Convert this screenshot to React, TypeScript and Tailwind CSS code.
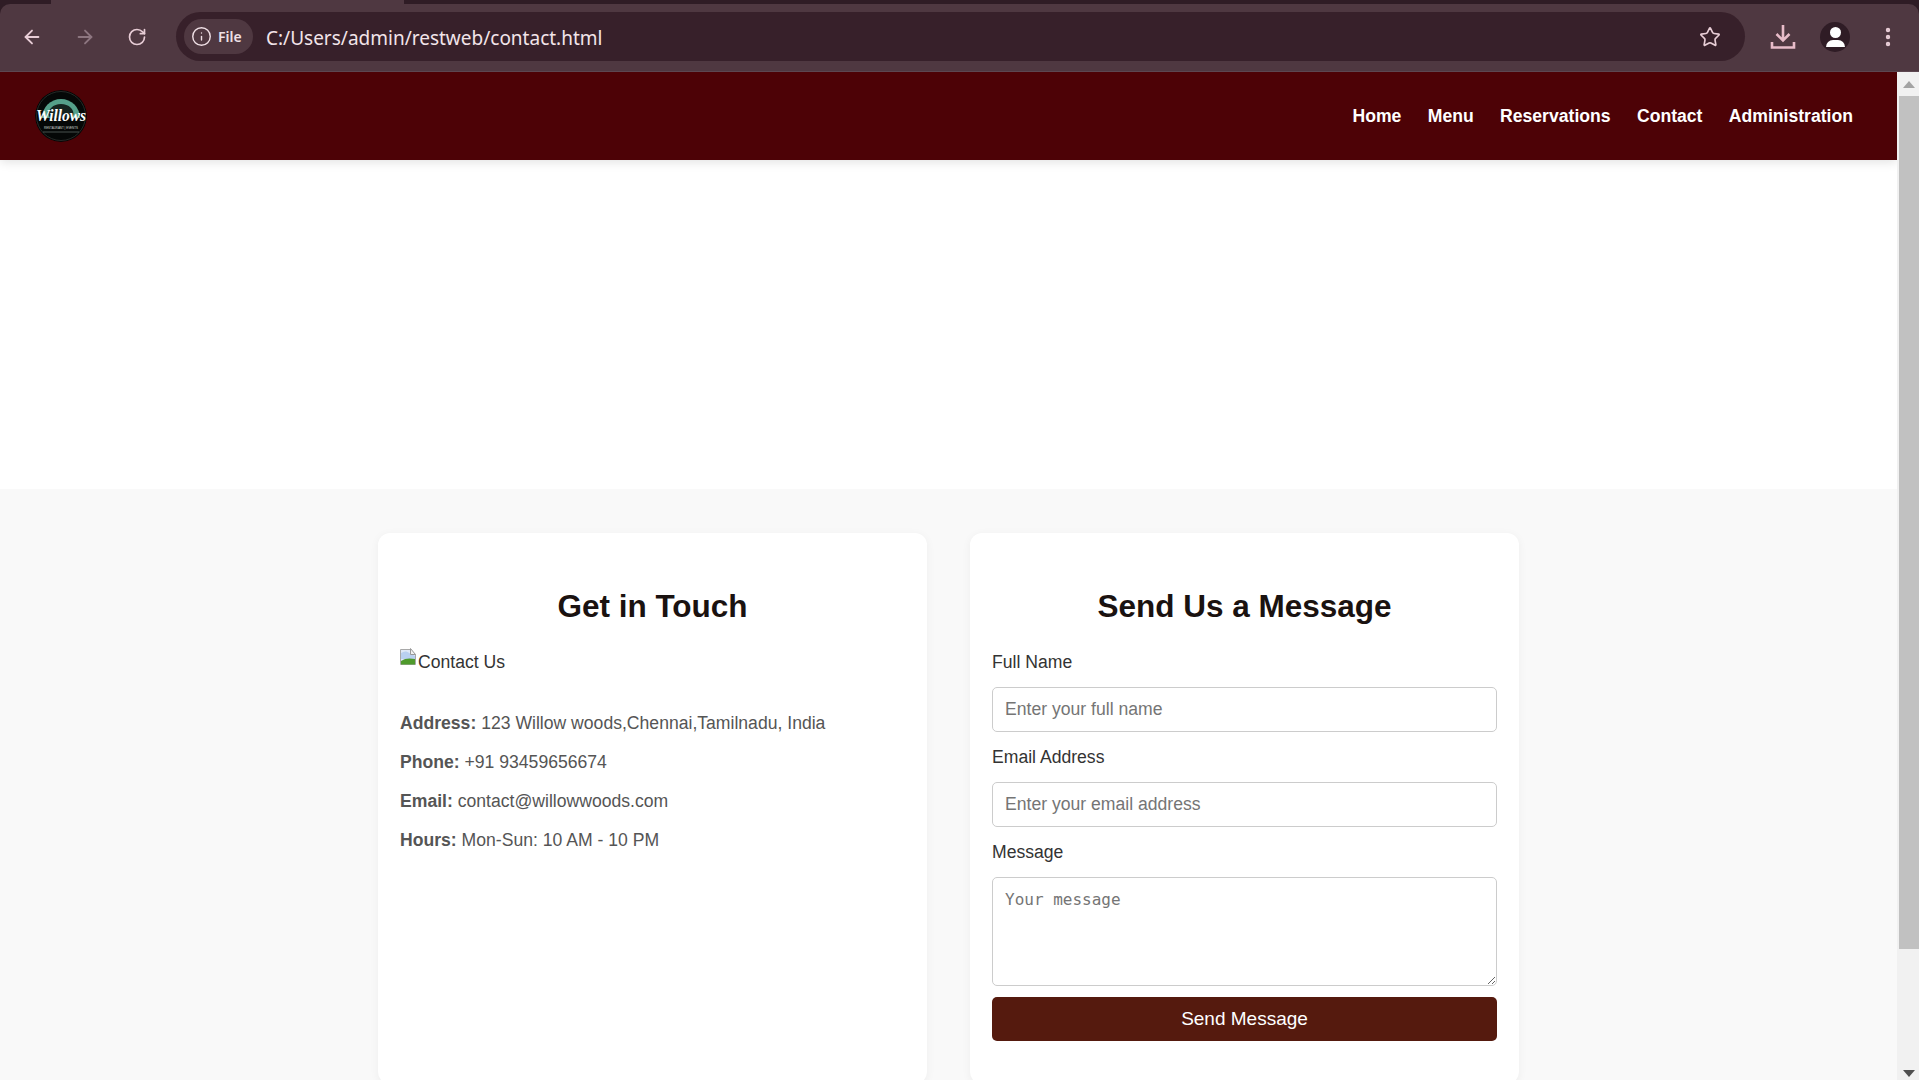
import { ArrowLeft, ArrowRight, RotateCw, Info, Star, EllipsisVertical } from "lucide-react";

const links = ["Home", "Menu", "Reservations", "Contact", "Administration"];

const BrowserBar = () => {
  return (
    <div className="h-[72px] shrink-0 bg-[#2f1c25] font-['Noto_Sans',sans-serif]">
      <div className="h-1 pl-[51px]">
        <div className="h-1 w-[353px] bg-[#4f3841]" />
      </div>
      <div className="h-[68px] rounded-t-[10px] bg-[#4f3841] border-b border-[#5d4751] flex items-center pb-[2px]">
        <div className="w-[176px] pl-[21px] flex items-center gap-[31px] text-[#e8cdd6]">
          <ArrowLeft size={22} strokeWidth={2} />
          <ArrowRight size={22} strokeWidth={2} className="text-[#8d7680]" />
          <RotateCw size={20} strokeWidth={2} />
        </div>
        <div className="w-[1569px] h-[49px] rounded-full bg-[#37202a] flex items-center pl-2 pr-[24px]">
          <div className="h-[35px] w-[69px] rounded-full bg-[#4f3841] flex items-center gap-[6px] pl-[7px] text-[#f0e0e6]">
            <Info size={21} strokeWidth={1.6} />
            <span className="text-[14px] font-semibold">File</span>
          </div>
          <span className="ml-[13px] text-[19px] leading-[24px] pt-[2px] text-[#f2e4e9]">C:/Users/admin/restweb/contact.html</span>
          <Star size={22} strokeWidth={1.8} className="ml-auto text-[#e8cdd6]" />
        </div>
        <svg width="26" height="26" viewBox="0 0 26 26" fill="none" stroke="#e8bcc9" strokeWidth="2.6" className="ml-[25px]">
          <path d="M13 1v15M6.5 10l6.5 6.5 6.5-6.5" />
          <path d="M2 18v5.5h22V18" />
        </svg>
        <div className="ml-[24px] w-[30px] h-[30px] rounded-full bg-[#2f1c25] flex flex-col items-center justify-center">
          <div className="w-[11px] h-[11px] rounded-full bg-white" />
          <div className="mt-[2px] w-[19px] h-[7px] rounded-t-[8px] bg-white" />
        </div>
        <EllipsisVertical size={24} strokeWidth={2.4} className="ml-[26px] text-[#e8cdd6]" />
      </div>
    </div>
  );
};

const Logo = () => {
  return (
    <svg width="52" height="52" viewBox="0 0 52 52" className="rounded-full">
      <circle cx="26" cy="26" r="26" fill="#050807" />
      <circle cx="26" cy="26" r="24.5" fill="none" stroke="#3a3f3d" strokeWidth="0.6" />
      <path d="M7 28a19 19 0 0 1 38 0z" fill="#55a08a" />
      <path d="M15 28c-2-3-2-7 1-10 3-3 6-4 10-4s7 1 10 4c3 3 3 7 1 10z" fill="#15241f" />
      <text x="26" y="31" textAnchor="middle" fontFamily="Liberation Serif, serif" fontStyle="italic" fontWeight="700" fontSize="16" fill="#fff" textLength="50" lengthAdjust="spacingAndGlyphs">
        Willows
      </text>
      <text x="26" y="38.5" textAnchor="middle" fontFamily="Liberation Sans, sans-serif" fontSize="3.2" fill="#d5dbd8" textLength="34" lengthAdjust="spacingAndGlyphs">
        RESTAURANT | EVENTS
      </text>
      <path d="M8 42h36" stroke="#8c9a95" strokeWidth="0.5" />
    </svg>
  );
};

const BrokenImage = () => {
  return (
    <svg width="16" height="17" viewBox="0 0 16 17" className="shrink-0 -mt-[3px] mr-[2px]">
      <path d="M0.5 1.5h10l5 5v10h-15z" fill="#dfe8f6" stroke="#a8a8a8" />
      <path d="M1 5c3-2 6-2 8 0l6 3v3H1z" fill="#b9d0f0" />
      <path d="M1 16.500v-3.500c4-3 9-3 14-2v5.500z" fill="#4f9a2c" />
      <path d="M10.500 0.500v6h5z" fill="#f2f2f2" stroke="#999" />
    </svg>
  );
};

const InfoLine = ({ label, value }: { label: string; value: string }) => {
  return (
    <p className="h-5 leading-[22px] mb-[19px] text-[#555]">
      <strong className="font-bold">{label}</strong> {value}
    </p>
  );
};

const Field = ({ label, placeholder, type }: { label: string; placeholder: string; type: string }) => {
  return (
    <>
      <label className="block h-5 leading-[22px] text-[#333]">{label}</label>
      <input
        type={type}
        placeholder={placeholder}
        className="block w-full h-[45px] mt-4 mb-[14px] px-3 bg-white border border-[#ccc] rounded-[5px] placeholder:text-[#757575]"
      />
    </>
  );
};

const Scrollbar = () => {
  return (
    <div className="w-[22px] shrink-0 bg-[#f1f1f1] flex flex-col items-end">
      <div className="w-full h-6 flex items-center justify-center pl-[2px]">
        <svg width="12" height="7" viewBox="0 0 12 7"><path d="M6 0l6 7H0z" fill="#a3a3a3" /></svg>
      </div>
      <div className="w-5 h-[853px] bg-[#c1c1c1]" />
      <div className="flex-1" />
      <div className="w-full h-[10px] flex items-start justify-center pl-[2px]">
        <svg width="12" height="7" viewBox="0 0 12 7"><path d="M0 0h12L6 7z" fill="#505050" /></svg>
      </div>
    </div>
  );
};

const App = () => {
  return (
    <div className="h-screen overflow-hidden flex flex-col font-['Liberation_Sans',Arial,sans-serif] text-[17.6px]">
      <BrowserBar />
      <div className="flex-1 min-h-0 flex">
        <main className="flex-1 min-w-0 overflow-hidden bg-white">
          <nav className="relative h-[88px] bg-[#4d0206] shadow-[0_2px_10px_rgba(0,0,0,0.12)] flex items-center justify-between pl-[35px] pr-[44px]">
            <Logo />
            <ul className="flex gap-[26.4px]">
              {links.map((link) => (
                <li key={link} className="font-bold text-white">
                  {link}
                </li>
              ))}
            </ul>
          </nav>
          <div className="h-[329px]" />
          <section className="bg-[#f9f9f9] pt-[44px] flex justify-center gap-[43px]">
            <div className="w-[549px] h-[551px] shrink-0 bg-white rounded-[12px] shadow-[0_2px_10px_rgba(0,0,0,0.05)] px-[22px] pt-[55px]">
              <h2 className="h-[37px] leading-[37px] mb-[26px] text-[31.5px] font-bold text-center text-[#1a1210]">Get in Touch</h2>
              <div className="flex h-5 leading-[22px] mb-[41px] text-[#333]">
                <BrokenImage />
                <span>Contact Us</span>
              </div>
              <InfoLine label="Address:" value="123 Willow woods,Chennai,Tamilnadu, India" />
              <InfoLine label="Phone:" value="+91 93459656674" />
              <InfoLine label="Email:" value="contact@willowwoods.com" />
              <InfoLine label="Hours:" value="Mon-Sun: 10 AM - 10 PM" />
            </div>
            <div className="w-[549px] h-[551px] shrink-0 bg-white rounded-[12px] shadow-[0_2px_10px_rgba(0,0,0,0.05)] px-[22px] pt-[55px]">
              <h2 className="h-[37px] leading-[37px] mb-[26px] text-[31.5px] font-bold text-center text-[#1a1210]">Send Us a Message</h2>
              <Field label="Full Name" placeholder="Enter your full name" type="text" />
              <Field label="Email Address" placeholder="Enter your email address" type="email" />
              <label className="block h-5 leading-[22px] text-[#333]">Message</label>
              <textarea
                placeholder="Your message"
                className="block w-full h-[109px] mt-4 mb-[11px] px-3 pt-3 bg-white border border-[#ccc] rounded-[5px] font-['DejaVu_Sans_Mono',monospace] text-[16px] leading-[20px] placeholder:text-[#757575]"
              />
              <button className="block w-full h-11 bg-[#551a0e] rounded-[5px] text-[19px] text-white">Send Message</button>
            </div>
          </section>
        </main>
        <Scrollbar />
      </div>
    </div>
  );
};

export default App;
